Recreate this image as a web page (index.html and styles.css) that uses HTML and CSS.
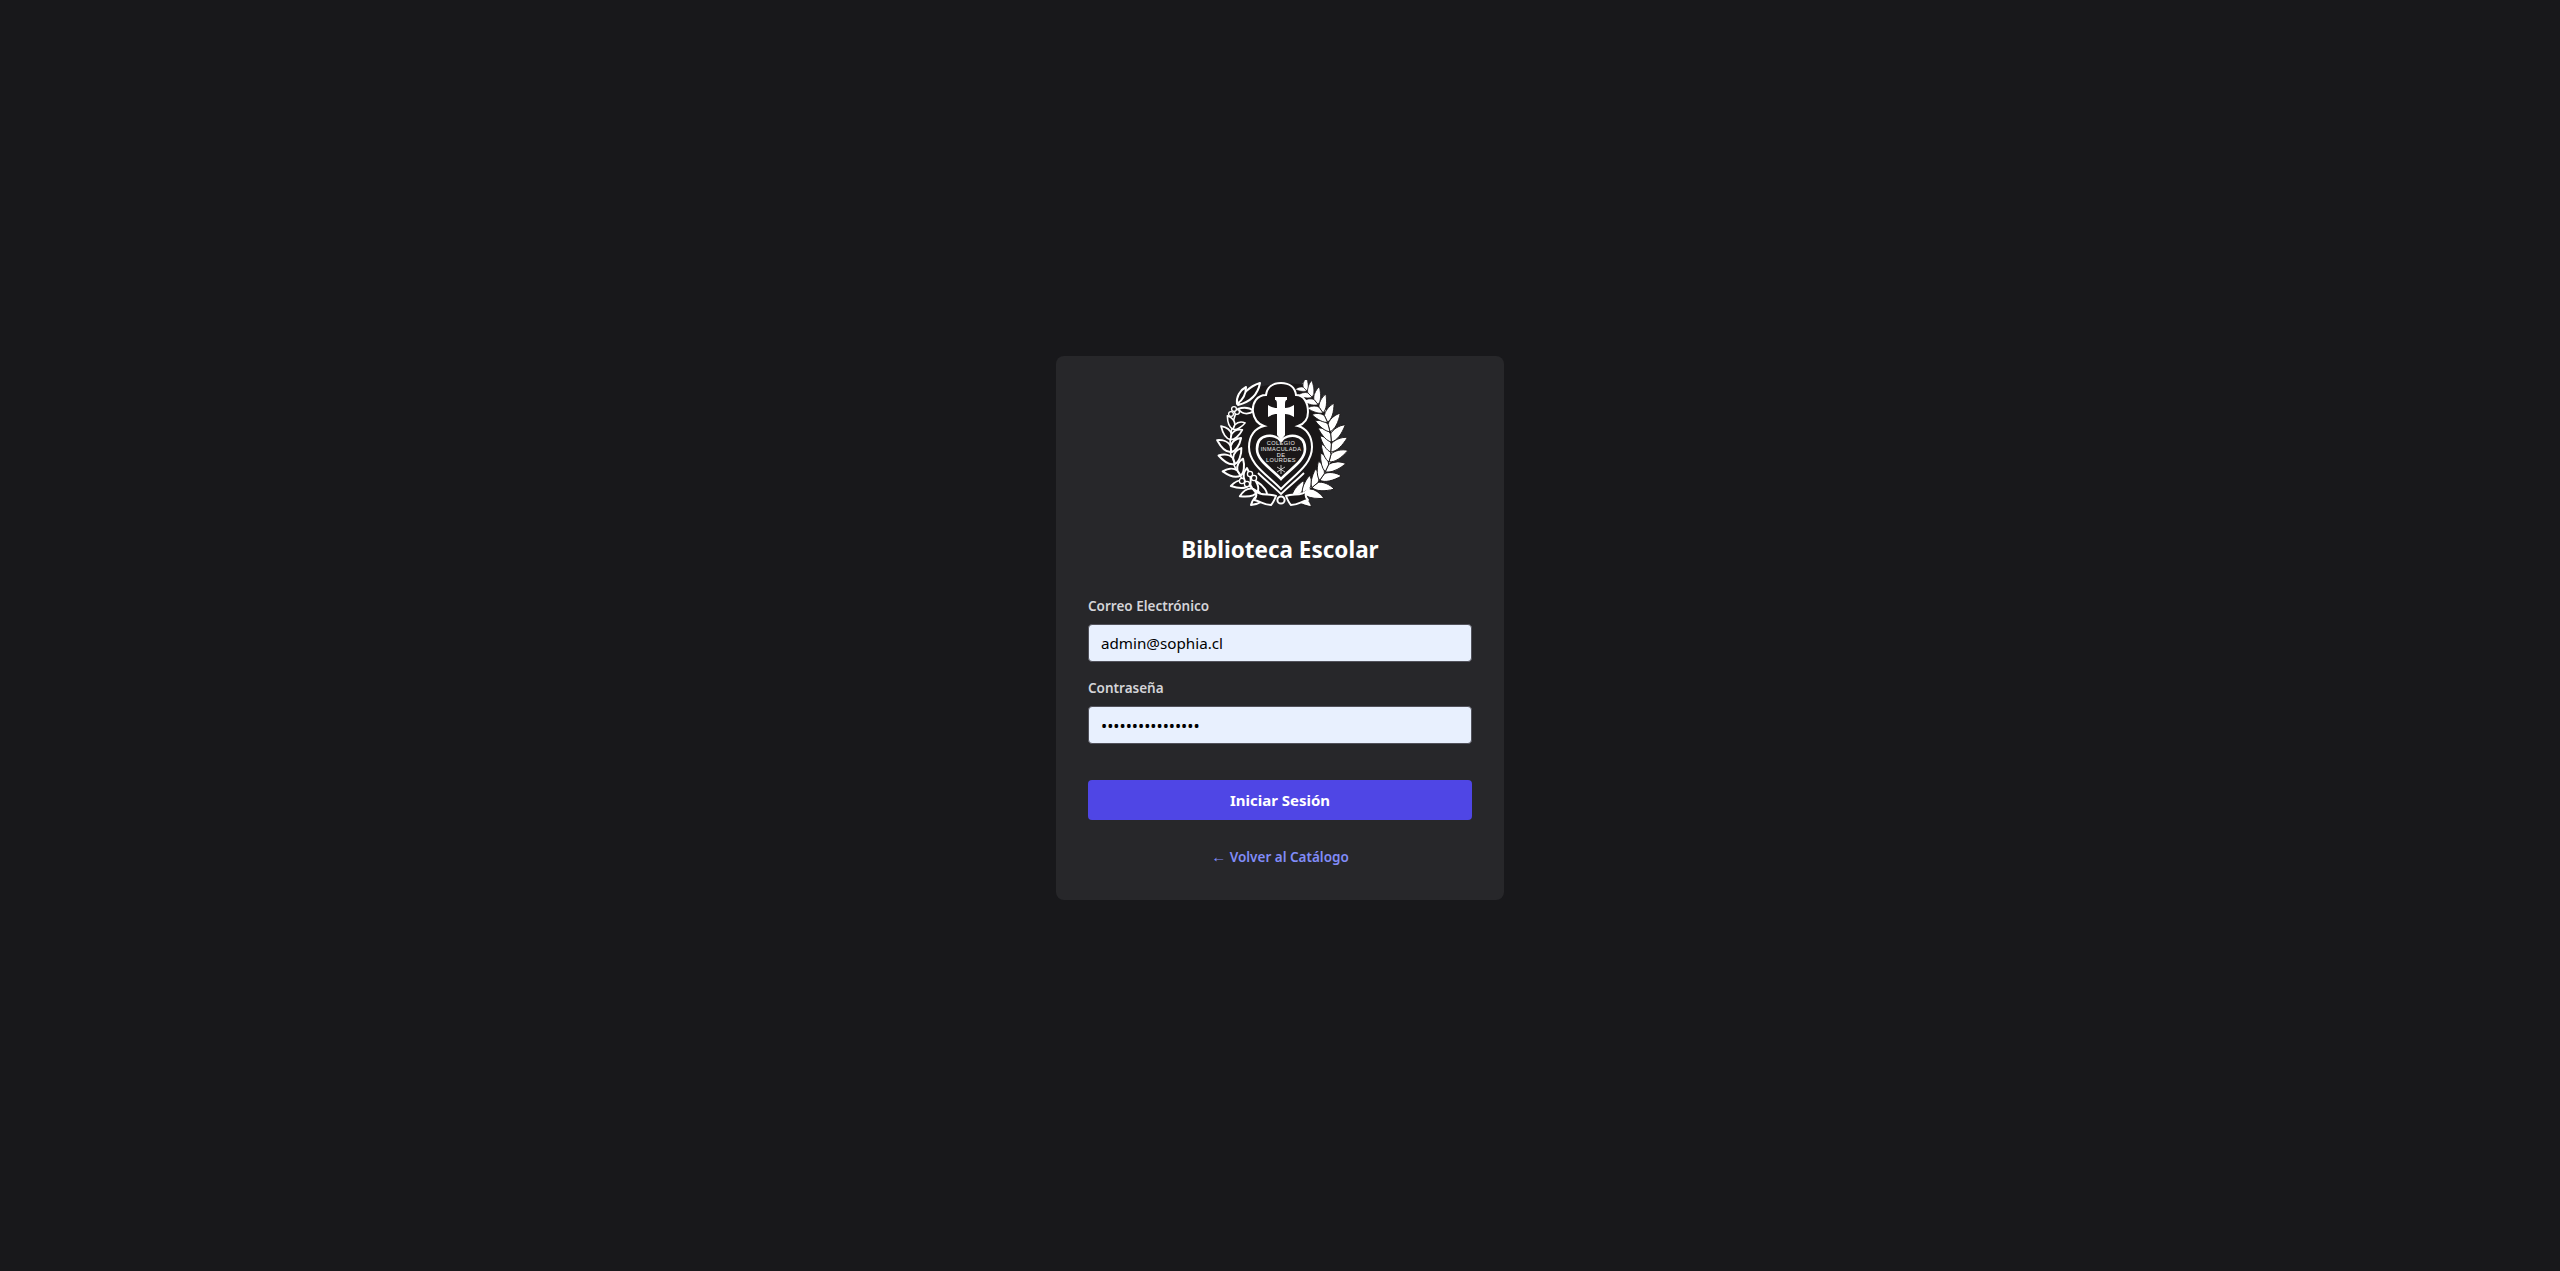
FILE: index.html
```html
<!DOCTYPE html>
<html lang="es">
<head>
<meta charset="utf-8">
<title>Biblioteca Escolar</title>
<link rel="stylesheet" href="styles.css">
</head>
<body>
<main class="page">
  <section class="card">
    <svg class="logo" viewBox="10 5 140 128" aria-label="Colegio Inmaculada de Lourdes">
      <defs>
        <g id="pr">
          <path class="solid" d="M-4 0C-3 6 3 11 12 15.500C12 9 8 2 4 0Z"/>
          <path class="solid" d="M-4 0C-3-4 3-9 11-12C11-7 8-2 4 0Z"/>
        </g>
        <g id="pl">
          <path class="open" d="M-3 0C-3 5 3 10 10 13C10 8 8 2 3 0Z"/>
          <path class="open" d="M-3 0C-3-4 3-9 10-11C10-6 8-2 3 0Z"/>
        </g>
      </defs>
      <path class="dark" d="M100 9 120 22 130 40 137 66 132 92 116 112 96 124 64 124 44 112 28 92 24 66 30 44 48 34 58 12 80 8Z"/>
      <!-- right branch -->
      <path class="stem" d="M90 122C115 115 133 95 133 68C133 45 122 25 103 8"/>
      <use href="#pr" transform="translate(96 120) rotate(-15)"/>
      <use href="#pr" transform="translate(106 116) rotate(-30)"/>
      <use href="#pr" transform="translate(115 110) rotate(-40)"/>
      <use href="#pr" transform="translate(122 102) rotate(-55)"/>
      <use href="#pr" transform="translate(127 93) rotate(-65)"/>
      <use href="#pr" transform="translate(130 83) rotate(-75)"/>
      <use href="#pr" transform="translate(131 73) rotate(-85)"/>
      <use href="#pr" transform="translate(131 63) rotate(-95)"/>
      <use href="#pr" transform="translate(129 53) rotate(-105) scale(.95)"/>
      <use href="#pr" transform="translate(126 44) rotate(-115) scale(.9)"/>
      <use href="#pr" transform="translate(121 35) rotate(-125) scale(.85)"/>
      <use href="#pr" transform="translate(116 27) rotate(-130) scale(.8)"/>
      <use href="#pr" transform="translate(110 20) rotate(-135) scale(.75)"/>
      <use href="#pr" transform="translate(105 14) rotate(-135) scale(.6)"/>
      <!-- left branch -->
      <path class="stem" d="M70 122C47 115 30 95 30 70C30 58 33 46 37 34"/>
      <use href="#pl" transform="matrix(-1 0 0 1 64 120) rotate(-15)"/>
      <use href="#pl" transform="matrix(-1 0 0 1 55 115) rotate(-30)"/>
      <use href="#pl" transform="matrix(-1 0 0 1 47 108) rotate(-42)"/>
      <use href="#pl" transform="matrix(-1 0 0 1 39 98) rotate(-58)"/>
      <use href="#pl" transform="matrix(-1 0 0 1 34 86) rotate(-72)"/>
      <use href="#pl" transform="matrix(-1 0 0 1 31 74) rotate(-85)"/>
      <use href="#pl" transform="matrix(-1 0 0 1 31 62) rotate(-100) scale(.9)"/>
      <use href="#pl" transform="matrix(-1 0 0 1 34 52) rotate(-112) scale(.8)"/>
      <!-- top left sprig -->
      <path class="open" d="M38 30C40 20 50 11 60 8C58 19 50 27 38 30Z"/>
      <path class="open" d="M37 29C36 22 40 15 46 12C46 18 43 25 37 29Z"/>
      <path class="open" d="M38 34C44 32 50 33 54 36C48 40 42 39 38 34Z"/>
      <circle class="berry" cx="31" cy="39" r="2.4"/>
      <circle class="berry" cx="37" cy="37" r="2.4"/>
      <circle class="berry" cx="34" cy="34" r="2.4"/>
      <circle class="berry" cx="50" cy="99" r="2.6"/>
      <circle class="berry" cx="54" cy="103" r="2.6"/>
      <circle class="berry" cx="42" cy="106" r="2.6"/>
      <circle class="berry" cx="47" cy="109" r="2.6"/>
      <!-- ornament -->
      <path class="emblem" d="M81 8C72 8 67 13 66 20C57 20 52 28 53 37C54 44 58 49 64 51C55 53 49 61 49 72C49 90 68 100 81 114C94 100 112 90 112 72C112 61 106 53 98 51C104 49 108 44 108 37C108 28 104 20 96 20C95 13 90 8 81 8Z"/>
      <path class="heart" d="M81 66C75 58 57 58 57 74C57 86 72 94 81 104C90 94 105 86 105 74C105 58 87 58 81 66Z"/>
      <path class="line" d="M58 98C66 106 74 112 81 119C88 112 96 106 104 98"/>
      <path class="cross" d="M75 22H87V25C85 25 85 27 85 33C88 33 91 32 94 30V42C91 40 88 39 85 39V60L81 65 77 60V39C74 39 71 40 68 42V30C71 32 74 33 77 33C77 27 77 25 75 25Z"/>
      <text class="motto" x="81" y="70">COLEGIO</text>
      <text class="motto" x="81" y="75.800">INMACULADA</text>
      <text class="motto" x="81" y="81.600">DE</text>
      <text class="motto" x="81" y="87.400">LOURDES</text>
      <path class="star" d="M81 90V99M77 92 85 97M85 92 77 97"/>
      <!-- ribbon -->
      <path class="open" d="M53 114C60 122 68 118 76 121C74 126 73 128 71 130C64 130 60 126 54 125C57 122 57 118 53 114Z"/>
      <path class="open" d="M109 114C102 122 94 118 86 121C88 126 89 128 91 130C98 130 102 126 108 125C105 122 105 118 109 114Z"/>
      <circle class="open" cx="81" cy="125" r="3.600"/>
    </svg>
    <h1 class="title">Biblioteca Escolar</h1>
    <form class="form">
      <label class="label" for="email">Correo Electrónico</label>
      <input class="input" id="email" type="email" value="admin@sophia.cl">
      <label class="label label-next" for="pass">Contraseña</label>
      <input class="input input-pass" id="pass" type="password" value="contrasena123456">
      <button class="button" type="button">Iniciar Sesión</button>
    </form>
    <a class="back" href="#"><span class="arrow">←</span> Volver al Catálogo</a>
  </section>
</main>
</body>
</html>
```
FILE: styles.css
```css
* { box-sizing: border-box; }
html, body { margin: 0; height: 100%; }
body {
  background: #18181b;
  font-family: "Noto Sans", "Open Sans", sans-serif;
}
.page {
  min-height: 100%;
  display: flex;
  justify-content: center;
  align-items: center;
  padding-bottom: 15px;
}
.card {
  width: 448px;
  height: 544px;
  padding: 24px 32px 32px;
  background: #27272a;
  border-radius: 8px;
  display: flex;
  flex-direction: column;
  align-items: center;
}
.logo { display: block; flex: none; width: 140px; height: 128px; }
.dark { fill: #1a1718; }
.stem { fill: none; stroke: #fff; stroke-width: 1.6; }
.solid { fill: #fff; stroke: #1a1718; stroke-width: .9; }
.open { fill: #1a1718; stroke: #fff; stroke-width: 2; stroke-linejoin: round; }
.berry { fill: #1a1718; stroke: #fff; stroke-width: 1.3; }
.emblem { fill: #1a1718; stroke: #fff; stroke-width: 2; }
.heart { fill: #1a1718; stroke: #fff; stroke-width: 2.6; }
.line { fill: none; stroke: #fff; stroke-width: 1.8; }
.cross { fill: #fff; }
.motto { fill: #ececec; font: 5.6px "Liberation Sans", sans-serif; text-anchor: middle; letter-spacing: .4px; }
.star { fill: none; stroke: #ececec; stroke-width: .8; }
.title {
  margin: 26px 0 0;
  font-size: 22.5px;
  line-height: 32px;
  font-weight: 700;
  color: #fff;
}
.form { width: 100%; margin-top: 30px; display: flex; flex-direction: column; }
.label {
  font-size: 13.5px;
  line-height: 20px;
  font-weight: 600;
  color: #d4d4d8;
  margin-bottom: 8px;
}
.label-next { margin-top: 16px; }
.input {
  width: 100%;
  height: 38px;
  padding: 0 12px;
  background: #e8f0fe;
  border: 1px solid #52525b;
  border-radius: 4px;
  color: #000;
  font: 15.2px "Noto Sans", sans-serif;
  outline: none;
}
.input-pass { font-size: 16.4px; }
.button {
  height: 40px;
  margin-top: 36px;
  border: 0;
  border-radius: 4px;
  background: #4f46e5;
  color: #fff;
  font: 700 15px "Noto Sans", sans-serif;
}
.back {
  margin-top: 27px;
  font-size: 13.5px;
  line-height: 20px;
  font-weight: 600;
  color: #818cf8;
  text-decoration: none;
}
.arrow { font-family: "Liberation Sans", sans-serif; font-size: 15px; }
```
